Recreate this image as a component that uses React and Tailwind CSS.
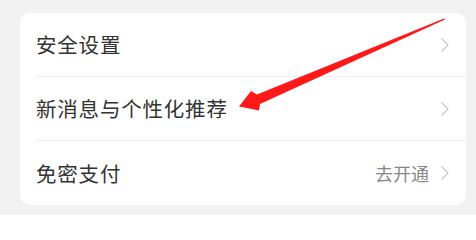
export default function App() {
  const rows = [
    { label: "安全设置" },
    { label: "新消息与个性化推荐" },
    { label: "免密支付", extra: "去开通" },
  ];
  return (
    <div
      className="relative w-[476px] h-[215px] bg-[#f2f2f2] pt-[13px] pl-[20px] pr-[10px]"
      style={{ fontFamily: '"Noto Sans CJK SC", "Noto Sans", sans-serif' }}
    >
      <div className="w-[446px] bg-white rounded-[10px] overflow-hidden">
        {rows.map((r, i) => (
          <div key={i} className="flex">
            <div className="w-[16px] shrink-0" />
            <div
              className={`flex-1 h-[64px] flex items-center justify-between pr-[17px] ${
                i < rows.length - 1 ? "border-b border-[#efefef]" : ""
              }`}
            >
              <span className="text-[20.5px] leading-none text-[#333] tracking-[0.8px]">{r.label}</span>
              <div className="flex items-center gap-[12px]">
                {r.extra && (
                  <span className="text-[18px] leading-none text-[#888]">{r.extra}</span>
                )}
                <svg width="8" height="14" viewBox="0 0 8 14" fill="none">
                  <path d="M1 1 L7 7 L1 13" stroke="#c8c8c8" strokeWidth="1.3" strokeLinecap="round" strokeLinejoin="round" />
                </svg>
              </div>
            </div>
          </div>
        ))}
      </div>
      <svg
        className="absolute left-0 top-0 pointer-events-none"
        width="476"
        height="215"
        viewBox="0 0 476 215"
      >
        <polygon
          points="239,106.5 251,91 257,94.5 444,18.5 445,19.5 260,104 259,110.5"
          fill="#ff1a1a"
        />
      </svg>
    </div>
  );
}
